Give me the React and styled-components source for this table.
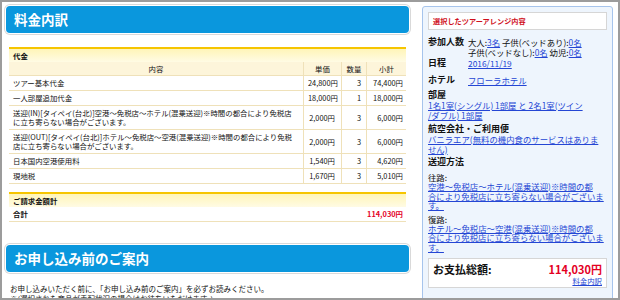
import React from 'react'
import styled, { createGlobalStyle } from 'styled-components'

const GlobalStyle = createGlobalStyle`
  html, body {
    margin: 0;
    padding: 0;
    background: #fff;
  }
  body {
    font-family: "Noto Sans CJK JP", "Noto Sans", sans-serif;
    color: #111;
  }
`

const rows = [
  { name: ['ツアー基本代金'], price: '24,800円', qty: 3, sum: '74,400円' },
  { name: ['一人部屋追加代金'], price: '18,000円', qty: 1, sum: '18,000円' },
  {
    name: [
      '送迎(IN)[タイペイ(台北)]空港～免税店～ホテル(混乗送迎)※時間の都合により免税店',
      'に立ち寄らない場合がございます。',
    ],
    price: '2,000円', qty: 3, sum: '6,000円',
  },
  {
    name: [
      '送迎(OUT)[タイペイ(台北)]ホテル～免税店～空港(混乗送迎)※時間の都合により免税',
      '店に立ち寄らない場合がございます。',
    ],
    price: '2,000円', qty: 3, sum: '6,000円',
  },
  { name: ['日本国内空港使用料'], price: '1,540円', qty: 3, sum: '4,620円' },
  { name: ['現地税'], price: '1,670円', qty: 3, sum: '5,010円' },
]

const Frame = styled.div`
  box-sizing: border-box;
  width: 620px;
  height: 300px;
  border: 2px solid #9c9c9c;
  padding: 2px 0 0 2px;
  display: flex;
  align-items: flex-start;
  overflow: hidden;
  background: #fff;
`

const Main = styled.div`
  flex: none;
  width: 408px;
`

const BlueHead = styled.h2`
  margin: ${p => p.$top}px 3px 0 2px;
  height: 27px;
  line-height: 27px;
  padding-left: 8px;
  border-radius: 4px;
  background: #0a97dd;
  box-shadow: 0 0 0 1px #fff, 0 0 0 2px #d9d9d9;
  color: #fff;
  font-size: 13.5px;
  font-weight: bold;
`

const Section = styled.section`
  margin: ${p => p.$top}px 6px 0 5px;
`

const SectionTitle = styled.div`
  height: 13px;
  line-height: 13px;
  padding-left: 4px;
  border-top: 2px solid #f6c500;
  background: linear-gradient(#fff5b8, #fffbe4);
  font-size: 7.4px;
  font-weight: bold;
`

const Table = styled.table`
  width: 100%;
  border-collapse: collapse;
  table-layout: fixed;
  font-size: 7.4px;
`

const Head = styled.th`
  width: ${p => (p.$w ? `${p.$w}px` : 'auto')};
  height: 13px;
  padding: 0;
  background: #fdf5da;
  border-bottom: 1px solid #efe1b9;
  border-left: ${p => (p.$first ? 'none' : '1px solid #efe1b9')};
  font-weight: normal;
  text-align: center;
  line-height: 13px;
`

const Cell = styled.td`
  padding: 2px ${p => p.$pr ?? 4}px 3px 4px;
  line-height: 9px;
  border-bottom: 1px solid #efe1b9;
  border-left: ${p => (p.$num ? '1px solid #efe1b9' : 'none')};
  text-align: ${p => (p.$num || p.$right ? 'right' : 'left')};
  vertical-align: middle;
  white-space: nowrap;
  font-weight: ${p => (p.$bold ? 'bold' : 'normal')};
  color: ${p => (p.$red ? '#e4001f' : '#111')};
`

const Notice = styled.p`
  margin: 12px 0 0;
  padding-left: 6px;
  font-size: 7.5px;
  line-height: 10px;
  white-space: nowrap;
`

const Side = styled.aside`
  box-sizing: border-box;
  flex: none;
  width: 191px;
  min-height: 320px;
  margin: 2px 0 0 10px;
  padding: 5px;
  border: 1px solid #a6c4ec;
  border-radius: 3px;
  background: #eef5fd;
`

const SideTitle = styled.div`
  box-sizing: border-box;
  height: 18px;
  line-height: 16px;
  padding-left: 4px;
  border: 1px solid #d6d6d6;
  background: #fff;
  color: #d0101b;
  font-size: 7.2px;
  font-weight: bold;
`

const InfoRow = styled.div`
  display: grid;
  grid-template-columns: 40px 1fr;
  margin-top: ${p => p.$top}px;
  line-height: 10px;
`

const Label = styled.div`
  font-size: 9px;
  font-weight: bold;
  line-height: ${p => p.$lh ?? 10}px;
`

const Value = styled.div`
  font-size: 8.4px;
  line-height: ${p => p.$lh ?? 10}px;
  white-space: nowrap;
`

const Block = styled.div`
  margin-top: ${p => p.$top}px;
`

const Sub = styled.div`
  margin-top: ${p => p.$top}px;
  font-size: 8.4px;
  line-height: 10px;
`

const Link = styled.a`
  color: #2446d4;
  text-decoration: underline;
`

const PayBox = styled.div`
  box-sizing: border-box;
  height: 30px;
  margin-top: 6px;
  padding: 2px 4px 0;
  border: 1px solid #d6d6d6;
  background: #fff;
`

const PayLine = styled.div`
  display: flex;
  justify-content: space-between;
  align-items: center;
  height: 15px;
`

const PayLabel = styled.span`
  font-size: 11px;
  font-weight: bold;
`

const PayAmount = styled.span`
  color: #e4001f;
  font-size: 11px;
  font-weight: bold;
`

const PayLink = styled(Link)`
  display: block;
  text-align: right;
  font-size: 7.4px;
  line-height: 10px;
`

const Lines = ({ lines }) =>
  lines.map((l, i) => (
    <React.Fragment key={i}>
      {l}
      {i < lines.length - 1 && <br />}
    </React.Fragment>
  ))

export default function App() {
  return (
    <>
      <GlobalStyle />
      <Frame>
        <Main>
          <BlueHead $top={2}>料金内訳</BlueHead>

          <Section $top={14}>
            <SectionTitle>代金</SectionTitle>
            <Table>
              <thead>
                <tr>
                  <Head $first>内容</Head>
                  <Head $w={37}>単価</Head>
                  <Head $w={24}>数量</Head>
                  <Head $w={39}>小計</Head>
                </tr>
              </thead>
              <tbody>
                {rows.map((r, i) => (
                  <tr key={i}>
                    <Cell><Lines lines={r.name} /></Cell>
                    <Cell $num $pr={6}>{r.price}</Cell>
                    <Cell $num $pr={5}>{r.qty}</Cell>
                    <Cell $num $pr={3}>{r.sum}</Cell>
                  </tr>
                ))}
              </tbody>
            </Table>
          </Section>

          <Section $top={8}>
            <SectionTitle>ご請求金額計</SectionTitle>
            <Table>
              <tbody>
                <tr>
                  <Cell $bold>合計</Cell>
                  <Cell $bold $red $right $pr={3}>114,030円</Cell>
                </tr>
              </tbody>
            </Table>
          </Section>

          <BlueHead $top={23}>お申し込み前のご案内</BlueHead>
          <Notice>
            お申し込みいただく前に、「お申し込み前のご案内」を必ずお読みください。
            <br />
            ※(選択された商品が手配状況の場合はお待ちいただけます。)
          </Notice>
        </Main>

        <Side>
          <SideTitle>選択したツアーアレンジ内容</SideTitle>

          <InfoRow $top={7}>
            <Label>参加人数</Label>
            <Value>
              大人:<Link>3名</Link> 子供(ベッドあり):<Link>0名</Link>
              <br />
              子供(ベッドなし):<Link>0名</Link> 幼児:<Link>0名</Link>
            </Value>
          </InfoRow>

          <InfoRow $top={1}>
            <Label>日程</Label>
            <Value><Link>2016/11/19</Link></Value>
          </InfoRow>

          <InfoRow $top={7}>
            <Label>ホテル</Label>
            <Value><Link>フローラホテル</Link></Value>
          </InfoRow>

          <Block $top={4}>
            <Label $lh={11}>部屋</Label>
            <Value>
              <Link>
                1名1室(シングル) 1部屋 と 2名1室(ツイン
                <br />
                /ダブル) 1部屋
              </Link>
            </Value>
          </Block>

          <Block $top={4}>
            <Label>航空会社・ご利用便</Label>
            <Value>
              <Link>
                バニラエア(無料の機内食のサービスはありま
                <br />
                せん)
              </Link>
            </Value>
          </Block>

          <Block $top={3}>
            <Label>送迎方法</Label>
            <Sub $top={5}>往路:</Sub>
            <Value $lh={9.5}>
              <Link>
                空港～免税店～ホテル(混乗送迎)※時間の都
                <br />
                合により免税店に立ち寄らない場合がございま
                <br />
                す。
              </Link>
            </Value>
            <Sub $top={3}>復路:</Sub>
            <Value $lh={9.5}>
              <Link>
                ホテル～免税店～空港(混乗送迎)※時間の都
                <br />
                合により免税店に立ち寄らない場合がございま
                <br />
                す。
              </Link>
            </Value>
          </Block>

          <PayBox>
            <PayLine>
              <PayLabel>お支払総額:</PayLabel>
              <PayAmount>114,030円</PayAmount>
            </PayLine>
            <PayLink>料金内訳</PayLink>
          </PayBox>
        </Side>
      </Frame>
    </>
  )
}
